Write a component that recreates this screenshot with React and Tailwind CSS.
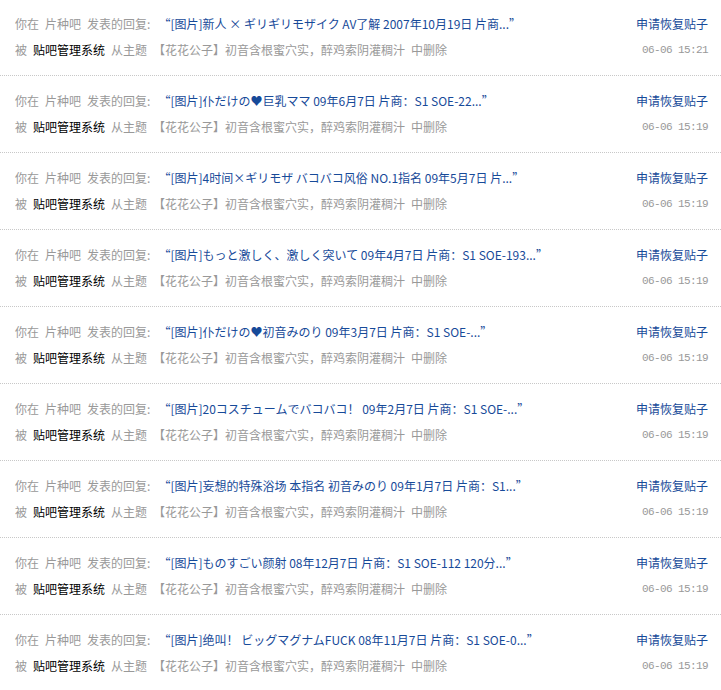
import React from 'react';

const rows = [
  { title: '[图片]新人 × ギリギリモザイク AV了解 2007年10月19日 片商...', time: '06-06 15:21' },
  { title: '[图片]仆だけの♥巨乳ママ 09年6月7日 片商：S1 SOE-22...', time: '06-06 15:19' },
  { title: '[图片]4时间×ギリモザ バコバコ风俗 NO.1指名 09年5月7日 片...', time: '06-06 15:19' },
  { title: '[图片]もっと激しく、激しく突いて 09年4月7日 片商：S1 SOE-193...', time: '06-06 15:19' },
  { title: '[图片]仆だけの♥初音みのり 09年3月7日 片商：S1 SOE-...', time: '06-06 15:19' },
  { title: '[图片]20コスチュームでバコバコ！ 09年2月7日 片商：S1 SOE-...', time: '06-06 15:19' },
  { title: '[图片]妄想的特殊浴场 本指名 初音みのり 09年1月7日 片商：S1...', time: '06-06 15:19' },
  { title: '[图片]ものすごい颜射 08年12月7日 片商：S1 SOE-112 120分...', time: '06-06 15:19' },
  { title: '[图片]绝叫！ ビッグマグナムFUCK 08年11月7日 片商：S1 SOE-0...', time: '06-06 15:19' },
];

const Row = ({ title, time }) => (
  <div className="flex justify-between pl-[15px] pr-[13px] pt-[12px] pb-[12px] border-b border-dotted border-[#c8c8c8]">
    <div className="flex flex-col">
      <div className="flex items-center h-[26px] whitespace-nowrap text-[#999]">
        <span>你在</span>
        <span className="ml-[6px]">片种吧</span>
        <span className="ml-[6px]">发表的回复:</span>
        <a href="#" className="ml-[8px] text-[#174a99]">“{title}”</a>
      </div>
      <div className="flex items-center h-[26px] whitespace-nowrap text-[#999]">
        <span>被</span>
        <span className="ml-[6px] text-black">贴吧管理系统</span>
        <span className="ml-[6px]">从主题</span>
        <span className="ml-[6px]">【花花公子】初音含根蜜穴实，醉鸡索阴灌稠汁</span>
        <span className="ml-[6px]">中删除</span>
      </div>
    </div>
    <div className="flex flex-col items-end">
      <a href="#" className="h-[26px] flex items-center text-[#174a99]">申请恢复贴子</a>
      <span className="h-[26px] flex items-center text-[11px] tracking-[-0.6px] text-[#999] font-['Liberation_Mono',monospace]">
        {time}
      </span>
    </div>
  </div>
);

export default function App() {
  return (
    <div className="w-[721px] h-[690px] overflow-hidden bg-white text-[12px] font-['SimSun','Noto_Sans_CJK_SC',sans-serif]">
      <div className="-mt-px">
        {rows.map((r, i) => (
          <Row key={i} title={r.title} time={r.time} />
        ))}
      </div>
    </div>
  );
}
